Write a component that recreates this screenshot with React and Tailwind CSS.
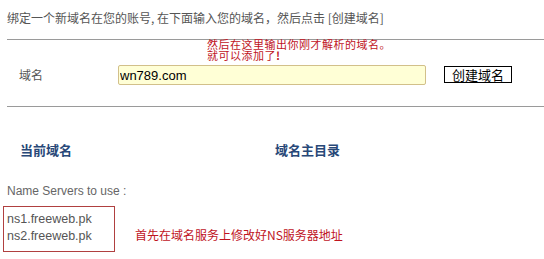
export default function App() {
  return (
    <div className="w-[544px] h-[259px] bg-white overflow-hidden font-['Liberation_Sans','Noto_Sans_CJK_SC',sans-serif]">
      {/* intro */}
      <div className="pt-[10px] pl-[7px] text-[12px] leading-[16px] text-[#555] font-['Noto_Sans_CJK_SC',sans-serif]">
        绑定一个新域名在您的账号, 在下面输入您的域名，然后点击 [创建域名]
      </div>
      <div className="mt-[13px] ml-[7px] h-px bg-[#9a9a9a]" />

      {/* form row */}
      <div className="relative h-[66px] pt-[25px] flex items-start">
        <div className="absolute left-[207px] top-[-1px] text-[11px] leading-[11px] tracking-[0.5px] text-[#c0141e] font-['Noto_Sans_CJK_SC',sans-serif]">
          <div>然后在这里输出你刚才解析的域名。</div>
          <div>
            就可以添加了<span className="font-bold">!</span>
          </div>
        </div>
        <span className="ml-[19px] w-[99px] h-[20px] leading-[20px] text-[12px] text-[#555] font-['Noto_Sans_CJK_SC',sans-serif]">
          域名
        </span>
        <input
          defaultValue="wn789.com"
          className="w-[308px] h-[20px] px-[1px] text-[13px] text-black bg-[#ffffd6] border border-[#d2c08a] rounded-[2px] outline-none font-['Liberation_Sans',sans-serif]"
        />
        <button className="ml-[18px] mt-[1px] w-[68px] h-[17px] border border-black bg-white text-[13px] leading-[15px] text-black font-['Noto_Sans_CJK_SC',sans-serif]">
          创建域名
        </button>
      </div>
      <div className="ml-[7px] h-px bg-[#9a9a9a]" />

      {/* headings */}
      <div className="mt-[35px] flex text-[13px] leading-[16px] font-bold text-[#284878] font-['Noto_Sans_CJK_SC',sans-serif]">
        <span className="ml-[20px] w-[255px]">当前域名</span>
        <span>域名主目录</span>
      </div>

      <div className="mt-[25px] pl-[7px] text-[12px] leading-[16px] text-[#666]">
        Name Servers to use :
      </div>

      <div className="mt-[7px] flex items-start">
        <div className="ml-[3px] w-[112px] h-[46px] border border-[#b04040] pt-[4px] pl-[3px] text-[12.5px] leading-[17px] text-[#555]">
          <div>ns1.freeweb.pk</div>
          <div>ns2.freeweb.pk</div>
        </div>
        <div className="ml-[20px] mt-[21px] text-[12px] leading-[16px] text-[#c0141e] font-['Noto_Sans_CJK_SC',sans-serif]">
          首先在域名服务上修改好NS服务器地址
        </div>
      </div>
    </div>
  );
}
